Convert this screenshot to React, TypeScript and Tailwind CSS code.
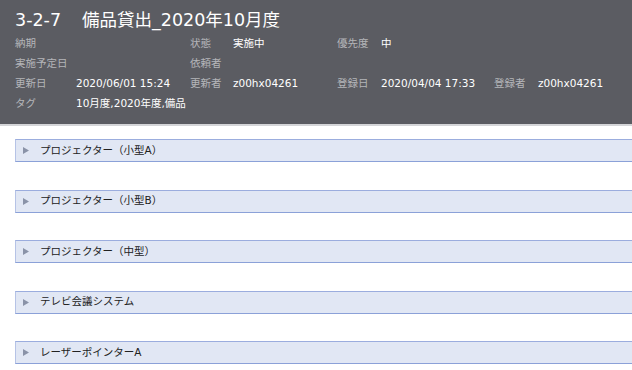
const font = { fontFamily: '"DejaVu Sans", "Noto Sans CJK JP", sans-serif' }

type Cell = [string, string]

const rows: Cell[][] = [
  [["納期", ""], ["状態", "実施中"], ["優先度", "中"]],
  [["実施予定日", ""], ["依頼者", ""]],
  [["更新日", "2020/06/01 15:24"], ["更新者", "z00hx04261"], ["登録日", "2020/04/04 17:33"], ["登録者", "z00hx04261"]],
  [["タグ", "10月度,2020年度,備品"]],
]

const items = [
  "プロジェクター（小型A）",
  "プロジェクター（小型B）",
  "プロジェクター（中型）",
  "テレビ会議システム",
  "レーザーポインターA",
]

export default function App() {
  return (
    <div className="w-[632px] h-[370px] bg-white overflow-hidden" style={font}>
      <div className="bg-[#5b5c62] pl-[15px] pt-[6px] pb-[10px] border-b-2 border-[#d4d5d8]">
        <div className="text-[17.5px] leading-[28px] text-white">
          3-2-7<span className="inline-block w-[21px]" />備品貸出_2020年10月度
        </div>
        <div className="mt-0">
          {rows.map((row, i) => (
            <div
              key={i}
              className="grid grid-cols-[61px_114px_43px_104px_44px_113px_44px_1fr] h-[20px] items-center text-[10.5px]"
            >
              {row.map(([label, value]) => (
                <>
                  <span key={label} className="text-[#b4b5b9] whitespace-nowrap">{label}</span>
                  <span key={label + "v"} className="text-white whitespace-nowrap">{value}</span>
                </>
              ))}
            </div>
          ))}
        </div>
      </div>
      <div className="pl-[15px] pt-[13px] flex flex-col gap-[27.5px]">
        {items.map((item) => (
          <div
            key={item}
            className="h-[23px] -mr-[4px] bg-[#e1e7f4] border-l border-t border-b border-t-[#9badde] border-l-[#b6c3e6] border-b-[#8ba1d8] flex items-center pl-[7px]"
          >
            <svg width="6" height="7" viewBox="0 0 6 7" className="mr-[11px]">
              <path d="M0 0 L6 3.5 L0 7 Z" fill="#8a93a8" />
            </svg>
            <span className="text-[10.5px] text-[#222]">{item}</span>
          </div>
        ))}
      </div>
    </div>
  )
}
